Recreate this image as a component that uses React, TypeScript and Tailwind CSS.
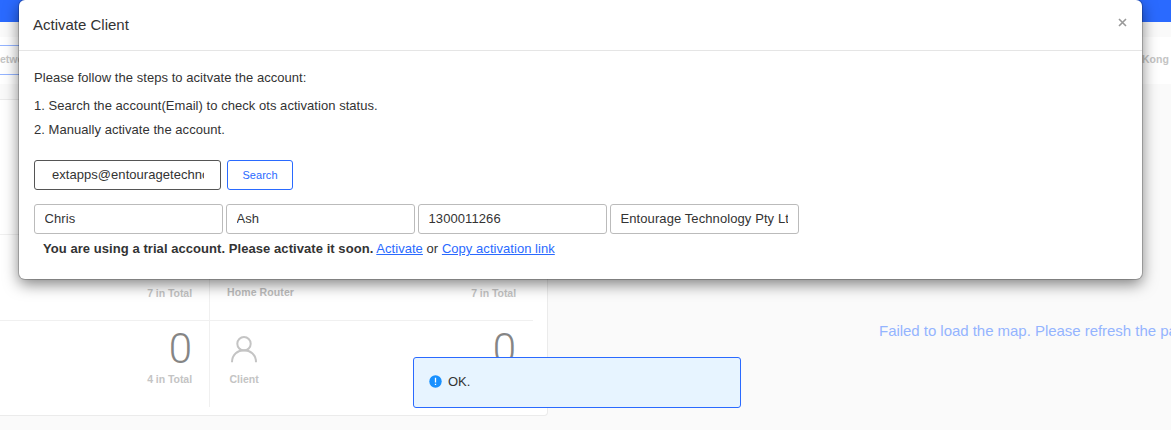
import type { ReactNode } from "react";

function Stat({ total, top, children }: { total: string; top: string; children?: ReactNode }) {
  return (
    <div className={`flex h-full flex-col items-end text-[10.5px] font-bold text-[#c4c4c4] ${top}`}>
      {children}
      <span className="leading-4 tracking-[-0.05px]">{total}</span>
    </div>
  );
}

function Zero() {
  return <span className="h-[47px] font-['Roboto',sans-serif] text-[42px] leading-[50px] font-[350] text-[#858585]">0</span>;
}

function Dashboard() {
  return (
    <div className="h-[430px] overflow-hidden bg-[#fafafa]">
      <div className="h-[22px] bg-[#2a6aff]" />
      <div className="h-[15px]" />
      <div className="flex h-[47px] items-center justify-between bg-white text-[10.5px] font-bold text-[#c4c4c4]">
        <div className="-mt-px flex h-[30px] w-[60px] items-center border-y border-[#94b4ff]">etwork</div>
        <div className="-mt-0.5 w-[29px]">Kong</div>
      </div>
      <div className="mt-[15px] flex">
        <div className="h-[317px] w-[548px] rounded-br border-t border-r border-b border-[#ebebeb] bg-white">
          <div className="h-[135px] w-[533px] border-b border-[#f0f0f0]" />
          <div className="flex h-[86px] w-[533px] border-b border-[#f0f0f0]">
            <div className="w-[210px] border-r border-[#f0f0f0] pr-[17px]">
              <Stat total="7 in Total" top="pt-[50px]" />
            </div>
            <div className="flex flex-1 justify-between pr-[17px] pl-[17px]">
              <span className="pt-[49px] text-[10.5px] leading-4 font-bold tracking-[0.1px] text-[#bdbdbd]">Home Router</span>
              <Stat total="7 in Total" top="pt-[50px]" />
            </div>
          </div>
          <div className="flex h-[86px] w-[533px]">
            <div className="w-[210px] border-r border-[#f0f0f0] pr-[17px]">
              <Stat total="4 in Total" top="pt-[3px]"><Zero /></Stat>
            </div>
            <div className="flex flex-1 justify-between pr-[17px] pl-[19.5px]">
              <div className="pt-[14px] text-[10.5px] font-bold text-[#c4c4c4]">
                <svg width="28" height="28" viewBox="0 0 28 28" fill="none" stroke="#c4c4c4" strokeWidth="2">
                  <circle cx="14" cy="8.8" r="6.7" />
                  <path d="M2 27.2C2 11.2 26 11.2 26 27.2" />
                </svg>
                <div className="mt-[8px] leading-4">Client</div>
              </div>
              <Stat total="4 in Total" top="pt-[3px]"><Zero /></Stat>
            </div>
          </div>
        </div>
        <div className="flex-1 overflow-hidden pt-[222px] pl-[331px] text-[15px] leading-5 tracking-[-0.035px] whitespace-nowrap text-[#94b4ff]">
          Failed to load the map. Please refresh the page.
        </div>
      </div>
    </div>
  );
}

const fields = ["Chris", "Ash", "1300011266", "Entourage Technology Pty Ltd"];

function ActivateDialog() {
  return (
    <section className="absolute top-0 left-[19px] h-[279px] w-[1123px] rounded-md bg-white text-[13px] tracking-[0.045px] text-[#333] shadow-[0_0_0_1px_rgba(0,0,0,0.2),0_5px_15px_rgba(0,0,0,0.5)]">
      <header className="flex h-[51px] items-center justify-between border-b border-[#e5e5e5] pr-[15px] pl-[14px]">
        <h1 className="text-[15px] tracking-normal">Activate Client</h1>
        <button className="-mt-1.5">
          <svg width="9" height="9" viewBox="0 0 9 9" stroke="#999" strokeWidth="1.6">
            <path d="M1 1l7 7M8 1l-7 7" />
          </svg>
        </button>
      </header>
      <div className="pt-[16px] pl-[15px]">
        <p className="leading-[22px]">Please follow the steps to acitvate the account:</p>
        <ol className="mt-[5px] leading-6">
          <li>1. Search the account(Email) to check ots activation status.</li>
          <li>2. Manually activate the account.</li>
        </ol>
        <div className="mt-[18px] flex gap-1.5">
          <div className="h-[30px] w-[187px] rounded-[3px] border border-[#555] pr-[16px] pl-[17px] leading-7">
            <div className="overflow-hidden whitespace-nowrap">extapps@entouragetechnology.com</div>
          </div>
          <button className="h-[30px] w-[66px] rounded-[3px] border border-[#2a6aff] text-[11px] text-[#2a6aff]">Search</button>
        </div>
        <div className="mt-[14px] flex gap-[3px]">
          {fields.map((f) => (
            <div key={f} className="h-[30px] w-[189px] rounded-[3px] border border-[#bbb] pr-[10px] pl-[9.5px] leading-7">
              <div className="overflow-hidden tracking-[0.09px] whitespace-nowrap">{f}</div>
            </div>
          ))}
        </div>
        <p className="pl-[9px] leading-[29px]">
          <b className="tracking-[0.06px]">You are using a trial account. Please activate it soon.</b>{" "}
          <a className="text-[#2a6aff] underline">Activate</a> or{" "}
          <a className="text-[#2a6aff] underline">Copy activation link</a>
        </p>
      </div>
    </section>
  );
}

function Toast() {
  return (
    <div className="absolute top-[357px] left-[413px] flex h-[51px] w-[328px] items-center rounded-[3px] border border-[#2a6aff] bg-[#e7f4ff] pb-px pl-[15px] text-[13px] text-[#333]">
      <svg width="13" height="13" viewBox="0 0 13 13" className="-mt-px mr-1.5">
        <circle cx="6.5" cy="6.5" r="6.2" fill="#1890ff" />
        <path d="M6.5 2.8v4.7M6.5 8.7v1.4" stroke="#fff" strokeWidth="1.3" />
      </svg>
      OK.
    </div>
  );
}

export default function App() {
  return (
    <main className="relative h-[430px] w-[1171px] overflow-hidden font-['Liberation_Sans',Arial,sans-serif]">
      <Dashboard />
      <ActivateDialog />
      <Toast />
    </main>
  );
}
